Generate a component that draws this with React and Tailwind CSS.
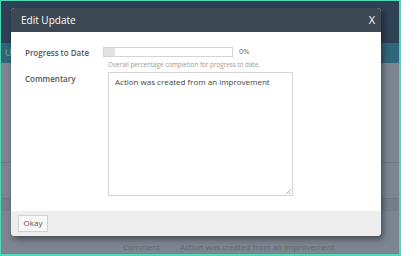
const font = { fontFamily: '"Open Sans", "Noto Sans", sans-serif' };

const EditUpdateModal = () => {
  return (
    <div className="absolute left-[10px] top-[7px] w-[370px] rounded-[4px] bg-white shadow-[2px_3px_6px_rgba(0,0,0,0.45)] overflow-hidden">
      {/* Header */}
      <div className="flex h-[24px] items-center justify-between bg-[#3c4853] pl-[10px] pr-[6px] text-white">
        <span className="text-[10px]">Edit Update</span>
        <span className="text-[11px]">X</span>
      </div>

      {/* Body */}
      <div className="px-[14px] pt-[14px] pb-[15px]">
        <div className="flex">
          <label className="w-[78px] pt-[1px] text-[8px] font-semibold text-[#555]">Progress to Date</label>
          <div className="flex flex-col">
            <div className="flex items-center gap-[6px]">
              <div className="h-[10px] w-[130px] border border-[#d4d4d4] bg-white">
                <div className="h-full w-[11px] bg-[#e2e2e2]" />
              </div>
              <span className="text-[7.5px] text-[#666]">0%</span>
            </div>
            <p className="mt-[3px] pl-[5px] text-[6.3px] text-[#9a9a9a]">
              Overall percentage completion for progress to date.
            </p>
          </div>
        </div>

        <div className="mt-[2px] flex">
          <label className="w-[83px] pt-[1px] text-[8px] font-semibold text-[#555]">Commentary</label>
          <div className="relative h-[124px] w-[185px] border border-[#d6d6d6] px-[6px] py-[3px] text-[8px] text-[#444]">
            Action was created from an improvement
            <svg className="absolute bottom-[1px] right-[1px]" width="6" height="6" viewBox="0 0 6 6">
              <path d="M1 6 L6 1 M3.5 6 L6 3.5" stroke="#999" strokeWidth="0.7" />
            </svg>
          </div>
        </div>
      </div>

      {/* Footer */}
      <div className="flex h-[25px] items-center bg-[#eeeeee] px-[7px]">
        <button className="flex h-[17px] w-[30px] items-center justify-center border border-[#d0d0d0] bg-[#f7f7f7] text-[8px] text-[#555]">
          Okay
        </button>
      </div>
    </div>
  );
};

const App = () => {
  return (
    <div
      style={font}
      className="relative h-[256px] w-[401px] overflow-hidden border-l border-t border-r-2 border-b-2 border-[#4fd8b5] bg-[#7c858f]"
    >
      {/* Page behind the overlay */}
      <div className="h-[42px] bg-[#2f4155]" />
      <div className="flex h-[20px] items-center bg-[#2f6679] pl-[4px] text-[9px] text-[#7fa9b6]">
        Up
      </div>
      <div className="h-[100px] border-b border-[#6f7782]" />
      <div className="h-[36px] border-b border-[#6f7782]" />
      <div className="h-[12px] bg-[#747d88]" />
      <div className="flex gap-[20px] pl-[122px] pt-[30px] text-[8px] text-[#5d6570]">
        <span>Comment</span>
        <span>Action was created from an improvement</span>
      </div>

      <EditUpdateModal />
    </div>
  );
};

export default App;
